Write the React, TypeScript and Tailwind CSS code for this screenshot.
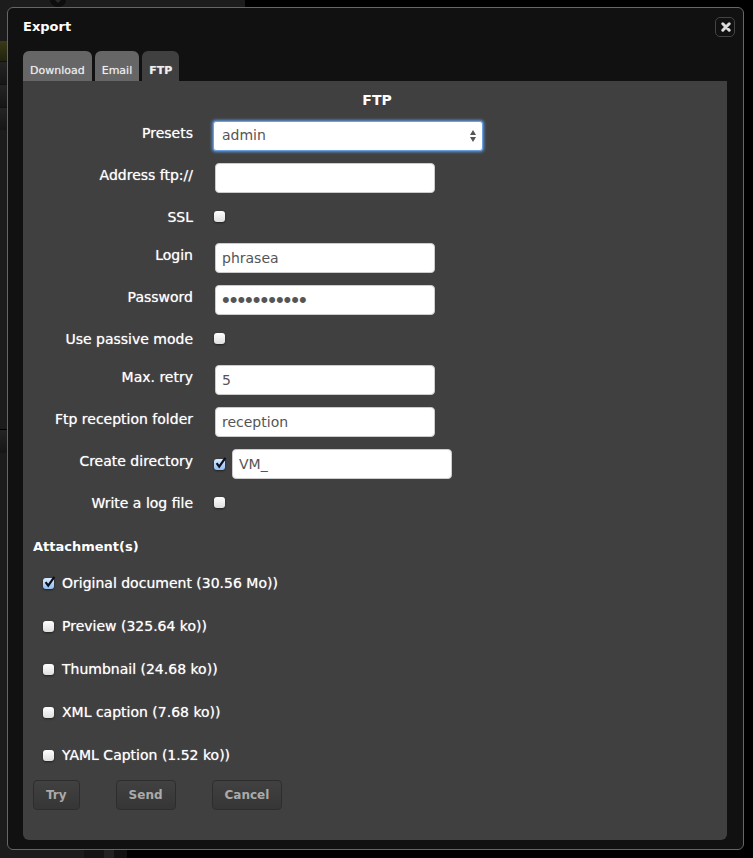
import React, { useState } from "react";

type CheckProps = { id: string; checked?: boolean };

function Check({ id, checked = false }: CheckProps) {
  return (
    <span className="relative block size-[11px] shrink-0">
      <input
        id={id}
        type="checkbox"
        defaultChecked={checked}
        className="peer block size-[11px] appearance-none rounded-[3px] bg-linear-to-b from-white to-[#dedede] shadow-[0_1px_2px_#222] checked:from-[#dcecff] checked:to-[#8fbdf2]"
      />
      <svg
        viewBox="0 0 14 13"
        className="pointer-events-none absolute -top-0.5 left-0 hidden h-[13px] w-3.5 peer-checked:block"
        aria-hidden="true"
      >
        <path d="M2.6 6.2 5.2 9.6 11.4 0.8" fill="none" stroke="#0b1020" strokeWidth="2.2" />
      </svg>
    </span>
  );
}

type RowProps = { id: string; label: string; short?: boolean; children: React.ReactNode };

function Row({ id, label, short = false, children }: RowProps) {
  return (
    <div className={short ? "flex h-[26px] gap-5" : "flex h-[30px] gap-5"}>
      <label htmlFor={id} className="w-[160px] shrink-0 text-right leading-6 text-white [text-shadow:0_0_1px_#ffffffb0]">
        {label}
      </label>
      {children}
    </div>
  );
}

const field =
  "h-[30px] w-[220px] min-w-0 rounded-[4px] border border-[#ccc] bg-white px-1.5 text-[#555] outline-none";

function TextRow({ id, label, value, type = "text" }: { id: string; label: string; value: string; type?: string }) {
  const font = type === "password" ? "font-['Liberation_Sans',Arial,sans-serif] text-[22px]" : "text-sm";
  return (
    <Row id={id} label={label}>
      <input id={id} type={type} defaultValue={value} className={`${field} ${font} ml-0.5`} />
    </Row>
  );
}

function CheckRow({ id, label }: { id: string; label: string }) {
  return (
    <Row id={id} label={label} short>
      <div className="pt-1.5 pl-px">
        <Check id={id} />
      </div>
    </Row>
  );
}

const attachments = [
  { id: "original", label: "Original document (30.56 Mo))", checked: true },
  { id: "preview", label: "Preview (325.64 ko))" },
  { id: "thumbnail", label: "Thumbnail (24.68 ko))" },
  { id: "xml", label: "XML caption (7.68 ko))" },
  { id: "yaml", label: "YAML Caption (1.52 ko))" },
];

const actionClass =
  "h-[30px] rounded-[4px] border border-[#2d2d2d] bg-linear-to-b from-[#414141] to-[#363636] px-3 text-xs font-bold text-[#aaa]";

function Backdrop() {
  return (
    <div className="absolute inset-0 -z-10 flex bg-black" aria-hidden="true">
      <div className="flex w-[245px] flex-col justify-between bg-[#1c1c1c]">
        <div className="pt-[41px]">
          <div className="h-5 bg-linear-to-b from-[#3a3a16] to-[#222210]" />
          <div className="h-[23px] border-t border-[#111] bg-linear-to-b from-[#242424] to-[#161616]" />
          <div className="h-[23px] border-t border-[#111] bg-linear-to-b from-[#242424] to-[#161616]" />
          <div className="h-[23px] border-t border-[#111] bg-linear-to-b from-[#242424] to-[#161616]" />
          <div className="mt-[299px] h-6 border-t border-black bg-linear-to-b from-[#242424] to-[#161616]" />
        </div>
        <div className="flex h-3">
          <div className="w-[84px] bg-[#1c1c1c]" />
          <div className="w-5 bg-[#141414]" />
          <div className="w-2.5 bg-[#222]" />
          <div className="w-[13px] bg-[#111]" />
          <div className="flex-1 bg-black" />
        </div>
      </div>
      <svg viewBox="0 0 16 7" className="absolute top-0 left-[50px] h-[7px] w-4">
        <path d="M0 0H16A8 7 0 0 1 0 0Z" fill="#0d0d0d" />
        <path d="M5 0H11L8 3Z" fill="#2a2a2a" />
      </svg>
    </div>
  );
}

export default function App() {
  const [tab, setTab] = useState("FTP");
  return (
    <div className="relative isolate min-h-screen pt-[7px] pr-[9px] pb-2 pl-[7px] font-['DejaVu_Sans',Verdana,sans-serif] text-sm text-white">
      <Backdrop />
      <section
        role="dialog"
        aria-labelledby="title"
        className="rounded-[6px] border border-[#666] bg-[#111] pr-4 pb-[9px] pl-[15px]"
      >
        <header className="-mr-2 flex h-[43px] items-start justify-between pt-[9px]">
          <h1 id="title" className="text-[13px] leading-5 font-bold">Export</h1>
          <button
            type="button"
            aria-label="Close"
            className="flex size-5 items-center justify-center rounded-[5px] border border-[#444] bg-[#111]"
          >
            <svg viewBox="0 0 10 10" className="ml-0.5 size-2.5" aria-hidden="true">
              <path d="M1.8 1.8 8.2 8.2M8.2 1.8 1.8 8.2" stroke="#ddd" strokeWidth="3" strokeLinecap="round" />
            </svg>
          </button>
        </header>
        <div role="tablist" className="flex gap-[3px] text-[11px]">
          {["Download", "Email", "FTP"].map((name) => (
            <button
              key={name}
              type="button"
              role="tab"
              aria-selected={tab === name}
              onClick={() => setTab(name)}
              className="h-[30px] rounded-t-[6px] bg-[#666] px-[7px] pt-2.5 leading-5 text-[#eee] [text-shadow:0_0_1px_#ffffff80] aria-selected:bg-[#404040] aria-selected:font-bold"
            >
              {name}
            </button>
          ))}
        </div>
        <div className="rounded-b-[6px] bg-[#404040] px-2.5 pt-[9px] pb-[30px]">
          <h2 className="pl-1 text-center leading-5 font-bold">FTP</h2>
          <form className="mt-[11px]" onSubmit={(e) => e.preventDefault()}>
            <div className="flex flex-col gap-3">
              <Row id="presets" label="Presets">
                <div className="relative h-[30px] w-[270px]">
                  <select
                    id="presets"
                    className="h-[30px] w-full appearance-none rounded-[3px] border border-[#6aa0de] bg-white px-2 pb-0.5 text-sm text-[#555] shadow-[0_0_3px_1px_#5c96dc] outline-none"
                  >
                    <option>admin</option>
                  </select>
                  <svg viewBox="0 0 6 12" className="pointer-events-none absolute top-[9px] right-[7px] h-3 w-1.5" aria-hidden="true">
                    <path d="M3 0 6 5H0ZM3 12 0 7H6Z" fill="#555" />
                  </svg>
                </div>
              </Row>
              <TextRow id="address" label="Address ftp://" value="" />
              <CheckRow id="ssl" label="SSL" />
              <TextRow id="login" label="Login" value="phrasea" />
              <TextRow id="password" label="Password" value="phraseanet1" type="password" />
              <CheckRow id="passive" label="Use passive mode" />
              <TextRow id="retry" label="Max. retry" value="5" />
              <TextRow id="folder" label="Ftp reception folder" value="reception" />
              <Row id="create" label="Create directory">
                <div className="flex items-center gap-[7px] pl-px">
                  <Check id="create" checked />
                  <input type="text" aria-label="Directory name" defaultValue="VM_" className={`${field} text-sm`} />
                </div>
              </Row>
              <CheckRow id="log" label="Write a log file" />
            </div>
            <fieldset className="mt-5">
              <legend className="text-[13px] leading-5 font-bold">Attachment(s)</legend>
              <div className="mt-4 flex flex-col gap-[23px] pl-2.5">
                {attachments.map((a) => (
                  <div key={a.id} className="flex items-center gap-2">
                    <Check id={a.id} checked={a.checked} />
                    <label htmlFor={a.id} className="leading-5 [text-shadow:0_0_1px_#ffffffb0]">{a.label}</label>
                  </div>
                ))}
              </div>
            </fieldset>
            <div className="mt-[15px] flex gap-9">
              <button type="button" className={actionClass}>Try</button>
              <button type="submit" className={actionClass}>Send</button>
              <button type="button" className={actionClass}>Cancel</button>
            </div>
          </form>
        </div>
      </section>
    </div>
  );
}
